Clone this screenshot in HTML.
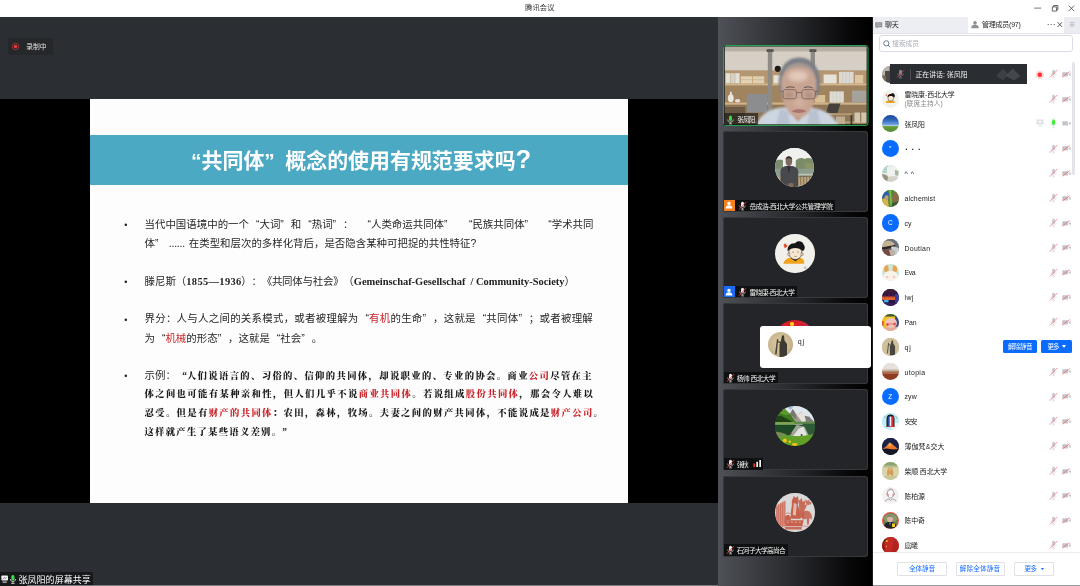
<!DOCTYPE html>
<html lang="zh-CN"><head><meta charset="utf-8"><title>腾讯会议</title>
<style>
html,body{margin:0;padding:0}
body{width:1080px;height:586px;overflow:hidden;position:relative;background:#fff;font-family:"Liberation Sans","Noto Sans CJK SC",sans-serif}
.a{position:absolute}
.t{position:absolute;white-space:nowrap;text-spacing-trim:space-all;font-kerning:none;filter:blur(.28px)}
.ql{display:inline-block;width:1em;text-align:right;letter-spacing:0}
.qr{display:inline-block;width:1em;text-align:left;letter-spacing:0}
.r{color:#c8262c}
.tile{position:absolute;left:723px;width:144.5px;height:81px;background:#232528;border-radius:3px;box-shadow:inset 0 0 0 1px #36383c}
.lab{position:absolute;left:723.5px;height:11.7px;background:rgba(12,13,14,.86)}
.av{position:absolute;border-radius:50%;overflow:hidden}
svg{position:absolute;overflow:visible}
</style></head><body>
<div class="t" style='left:525px;top:3.49px;font-size:7.3px;line-height:10.22px;color:#333;font-weight:400;font-family:"Liberation Sans","Noto Sans CJK SC",sans-serif;letter-spacing:0.104px;'>腾讯会议</div>
<svg style="left:1030px;top:0" width="50" height="17" viewBox="0 0 50 17">
<path d="M4.2 8.1h7" stroke="#555" stroke-width="0.8" fill="none"/>
<path d="M22.3 6.9h4.3v4.2h-4.3zM23.6 6.9v-1.4h4.3v4.2h-1.3" stroke="#444" stroke-width="0.8" fill="none"/>
<path d="M38.8 5.6l5.3 5.4M44.1 5.6l-5.3 5.4" stroke="#444" stroke-width="0.8" fill="none"/>
</svg>
<div class="a" style="left:0px;top:17px;width:718px;height:569px;background:#2b2e32;"></div>
<div class="a" style="left:0px;top:99px;width:718px;height:404px;background:#000;"></div>
<div class="a" style="left:90px;top:99px;width:538px;height:404px;background:#fdfdfd;"></div>
<div class="a" style="left:90px;top:135px;width:538px;height:49.5px;background:#4ba9c3;"></div>
<div class="a" style="left:7.5px;top:38px;width:45.5px;height:16.5px;background:#25272a;border-radius:2px"></div>
<svg style="left:11px;top:42px" width="9" height="9" viewBox="0 0 9 9"><circle cx="4.5" cy="4.5" r="3.3" fill="none" stroke="#c43a3a" stroke-width="0.7"/><circle cx="4.5" cy="4.5" r="1.8" fill="#e23c3c"/></svg>
<div class="t" style='left:26.2px;top:41.84px;font-size:6.8px;line-height:9.52px;color:#e4e4e4;font-weight:400;font-family:"Liberation Sans","Noto Sans CJK SC",sans-serif;letter-spacing:-0.045px;'>录制中</div>
<div class="t" style='left:180.6px;top:145.94px;font-size:20.95px;line-height:29.33px;color:#fff;font-weight:700;font-family:"Liberation Sans","Noto Sans CJK SC",sans-serif;'><span class="ql">“</span>共同体<span class="qr">”</span>概念的使用有规范要求吗<span style="font-size:1.22em;line-height:0;position:relative;top:0.4px">?</span></div>
<div class="t" style='left:124.3px;top:218.9px;font-size:9px;line-height:12.6px;color:#222;font-weight:400;font-family:"Liberation Sans","Noto Sans CJK SC",sans-serif;'>•</div>
<div class="t" style='left:124.3px;top:275.7px;font-size:9px;line-height:12.6px;color:#222;font-weight:400;font-family:"Liberation Sans","Noto Sans CJK SC",sans-serif;'>•</div>
<div class="t" style='left:124.3px;top:313.6px;font-size:9px;line-height:12.6px;color:#222;font-weight:400;font-family:"Liberation Sans","Noto Sans CJK SC",sans-serif;'>•</div>
<div class="t" style='left:124.3px;top:369.9px;font-size:9px;line-height:12.6px;color:#222;font-weight:400;font-family:"Liberation Sans","Noto Sans CJK SC",sans-serif;'>•</div>
<div class="t" style='left:144.5px;top:217.78px;font-size:10.45px;line-height:14.63px;color:#262626;font-weight:400;font-family:"Liberation Sans","Noto Sans CJK SC",sans-serif;letter-spacing:0.013px;'>当代中国语境中的一个<span class="ql">“</span>大词<span class="qr">”</span>和<span class="ql">“</span>热词<span class="qr">”</span>：</div>
<div class="t" style='left:360.5px;top:217.78px;font-size:10.45px;line-height:14.63px;color:#262626;font-weight:400;font-family:"Liberation Sans","Noto Sans CJK SC",sans-serif;letter-spacing:0.008px;'><span class="ql">“</span>人类命运共同体<span class="qr">”</span></div>
<div class="t" style='left:462px;top:217.78px;font-size:10.45px;line-height:14.63px;color:#262626;font-weight:400;font-family:"Liberation Sans","Noto Sans CJK SC",sans-serif;letter-spacing:-0.01px;'><span class="ql">“</span>民族共同体<span class="qr">”</span></div>
<div class="t" style='left:541.3px;top:217.78px;font-size:10.45px;line-height:14.63px;color:#262626;font-weight:400;font-family:"Liberation Sans","Noto Sans CJK SC",sans-serif;letter-spacing:0.003px;'><span class="ql">“</span>学术共同</div>
<div class="t" style='left:144.5px;top:237.09px;font-size:10.45px;line-height:14.63px;color:#262626;font-weight:400;font-family:"Liberation Sans","Noto Sans CJK SC",sans-serif;'>体<span class="qr">”</span></div>
<div class="t" style='left:168.8px;top:237.09px;font-size:10.45px;line-height:14.63px;color:#262626;font-weight:400;font-family:"Liberation Sans","Noto Sans CJK SC",sans-serif;letter-spacing:-0.221px;'>......</div>
<div class="t" style='left:188.8px;top:237.09px;font-size:10.45px;line-height:14.63px;color:#262626;font-weight:400;font-family:"Liberation Sans","Noto Sans CJK SC",sans-serif;letter-spacing:-0.005px;'>在类型和层次的多样化背后，是否隐含某种可把捉的共性特征?</div>
<div class="t" style='left:144.5px;top:274.58px;font-size:10.45px;line-height:14.63px;color:#262626;font-weight:400;font-family:"Liberation Sans","Noto Sans CJK SC",sans-serif;letter-spacing:0.017px;'>滕尼斯（</div>
<div class="t" style='left:186.3px;top:274.79px;font-size:10.45px;line-height:14.63px;color:#222;font-weight:700;font-family:"Liberation Serif","Noto Serif CJK SC",serif;letter-spacing:0.352px;'>1855—1936</div>
<div class="t" style='left:241.3px;top:274.58px;font-size:10.45px;line-height:14.63px;color:#262626;font-weight:400;font-family:"Liberation Sans","Noto Sans CJK SC",sans-serif;letter-spacing:-0.231px;'>）：《共同体与社会》（</div>
<div class="t" style='left:353.8px;top:274.79px;font-size:10.45px;line-height:14.63px;color:#222;font-weight:700;font-family:"Liberation Serif","Noto Serif CJK SC",serif;letter-spacing:-0.015px;'>Gemeinschaf-Gesellschaf&nbsp; / Community-Society</div>
<div class="t" style='left:564.5px;top:274.58px;font-size:10.45px;line-height:14.63px;color:#262626;font-weight:400;font-family:"Liberation Sans","Noto Sans CJK SC",sans-serif;'>）</div>
<div class="t" style='left:144.5px;top:312.49px;font-size:10.45px;line-height:14.63px;color:#262626;font-weight:400;font-family:"Liberation Sans","Noto Sans CJK SC",sans-serif;letter-spacing:0.266px;'>界分：人与人之间的关系模式，或者被理解为<span class="ql">“</span><span class="r">有机</span>的生命<span class="qr">”</span>，这就是<span class="ql">“</span>共同体<span class="qr">”</span>；或者被理解</div>
<div class="t" style='left:144.5px;top:331.69px;font-size:10.45px;line-height:14.63px;color:#262626;font-weight:400;font-family:"Liberation Sans","Noto Sans CJK SC",sans-serif;letter-spacing:0.01px;'>为<span class="ql">“</span><span class="r">机械</span>的形态<span class="qr">”</span>，这就是<span class="ql">“</span>社会<span class="qr">”</span>。</div>
<div class="t" style='left:144.5px;top:368.79px;font-size:10.45px;line-height:14.63px;color:#262626;font-weight:400;font-family:"Liberation Sans","Noto Sans CJK SC",sans-serif;letter-spacing:0.044px;'>示例：</div>
<div class="t" style='left:177.5px;top:369.52px;font-size:9.4px;line-height:13.16px;color:#1c1c1c;font-weight:900;font-family:"Liberation Serif","Noto Serif CJK SC",serif;letter-spacing:1.311px;'><span class="ql">“</span>人们说语言的、习俗的、信仰的共同体，却说职业的、专业的协会。商业<span class="r">公司</span>尽管在主</div>
<div class="t" style='left:144.5px;top:388.22px;font-size:9.4px;line-height:13.16px;color:#1c1c1c;font-weight:900;font-family:"Liberation Serif","Noto Serif CJK SC",serif;letter-spacing:1.333px;'>体之间也可能有某种亲和性，但人们几乎不说<span class="r">商业共同体</span>。若说组成<span class="r">股份共同体</span>，那会令人难以</div>
<div class="t" style='left:144.5px;top:407.12px;font-size:9.4px;line-height:13.16px;color:#1c1c1c;font-weight:900;font-family:"Liberation Serif","Noto Serif CJK SC",serif;letter-spacing:1.317px;'>忍受。但是有<span class="r">财产的共同体</span>：农田，森林，牧场。夫妻之间的财产共同体，不能说成是<span class="r">财产公司</span>。</div>
<div class="t" style='left:144.5px;top:426.32px;font-size:9.4px;line-height:13.16px;color:#1c1c1c;font-weight:900;font-family:"Liberation Serif","Noto Serif CJK SC",serif;letter-spacing:1.225px;'>这样就产生了某些语义差别。”</div>
<div class="a" style="left:0px;top:572px;width:92.6px;height:14px;background:#17181a;"></div>
<svg style="left:1px;top:574.5px" width="16" height="9" viewBox="0 0 16 9">
<rect x="0.4" y="0.4" width="6.6" height="5.2" rx="0.8" fill="#f2f2f2"/><path d="M2.2 4.2l1.2-1.6 1 .9 1.1-1.3" stroke="#555" stroke-width="0.7" fill="none"/><rect x="1.6" y="6.6" width="4.2" height="1" fill="#f2f2f2"/>
<rect x="10.4" y="0" width="3" height="5.4" rx="1.5" fill="#3fe04f"/><path d="M9.3 4c0 3.4 5.2 3.4 5.2 0M11.9 6.6v1.6M10.2 8.4h3.4" stroke="#e8e8e8" stroke-width="0.8" fill="none"/>
</svg>
<div class="t" style='left:18.5px;top:573.7px;font-size:9px;line-height:12.6px;color:#fff;font-weight:400;font-family:"Liberation Sans","Noto Sans CJK SC",sans-serif;letter-spacing:0.041px;'>张凤阳的屏幕共享</div>
<div class="a" style="left:27px;top:585px;width:845px;height:1px;background:#77797c;"></div>
<div class="a" style="left:718px;top:17px;width:154px;height:569px;background:linear-gradient(to right,#4e5157 0%,#3a3c41 25%,#232427 55%,#08080a 85%,#000 100%);"></div>
<svg style="left:722.5px;top:45px" width="145.5" height="81" viewBox="0 0 145.5 81">
<defs><filter id="bl" x="-5%" y="-5%" width="110%" height="110%"><feGaussianBlur stdDeviation="0.5"/></filter>
<filter id="bl2" x="-10%" y="-10%" width="120%" height="120%"><feGaussianBlur stdDeviation="1"/></filter>
<filter id="bl3" x="-20%" y="-20%" width="140%" height="140%"><feGaussianBlur stdDeviation="2"/></filter>
<clipPath id="vc"><rect x="1.8" y="1.6" width="141.8" height="77.6" rx="1.2"/></clipPath></defs>
<rect x="0" y="0" width="145.5" height="81" rx="2.5" fill="#13241a"/>
<g clip-path="url(#vc)">
<g filter="url(#bl)">
<rect x="0" y="0" width="146" height="27" fill="#d6cfc6"/>
<rect x="0" y="0" width="146" height="6.4" fill="#b7afa4"/>
<rect x="0" y="25.6" width="146" height="56" fill="#a98b66"/>
<rect x="0" y="25.6" width="146" height="12.8" fill="#b4976f"/>
<rect x="0" y="38.4" width="146" height="2.2" fill="#d2b78e"/>
<rect x="0" y="40.6" width="146" height="17" fill="#a08460"/>
<rect x="0" y="57.6" width="146" height="2.2" fill="#cfb48b"/>
<rect x="0" y="59.8" width="146" height="22" fill="#8f7656"/>
<rect x="0" y="76.5" width="146" height="1.8" fill="#bfa27a"/>
<rect x="44.8" y="4" width="4.4" height="66" fill="#8f8b85"/>
<rect x="87.6" y="4" width="4.4" height="40" fill="#8f8b85"/>
<rect x="43.6" y="4.2" width="7" height="2.8" fill="#5a5753"/>
<rect x="86.4" y="4.2" width="7" height="2.8" fill="#5a5753"/>
<rect x="2.6" y="28.2" width="4.4" height="10" fill="#e5e0d8"/><rect x="7.4" y="28.2" width="4.4" height="10" fill="#d6d1c8"/><rect x="12.2" y="28.2" width="4.4" height="10" fill="#e5e0d8"/>
<rect x="17.8" y="31.3" width="11.4" height="7" fill="#e3d3b5"/><rect x="29.8" y="31.3" width="11.4" height="7" fill="#e0cfb0"/>
<rect x="17.8" y="34.5" width="23.4" height="0.6" fill="#c2ae8b"/>
<rect x="50.4" y="30.3" width="7.6" height="8" fill="#e6e2da"/>
<circle cx="54.8" cy="23.8" r="3.1" fill="#1b1a19"/>
<rect x="100.6" y="29.5" width="13" height="8.8" fill="#e8e3da"/>
<rect x="116" y="26.8" width="14.5" height="11.5" fill="#dcd9d2"/><path d="M119.500 26.800v11.500M123 26.800v11.500M126.500 26.800v11.500" stroke="#c2beb6" stroke-width="0.500"/>
<rect x="132" y="30" width="8.200" height="8.300" fill="#ddc7a1"/>
<rect x="106.600" y="46.400" width="14.200" height="11.200" fill="#dedbd5"/><path d="M110 46.400v11.200M113.500 46.400v11.200M117 46.400v11.200" stroke="#c4c0b8" stroke-width="0.500"/>
<rect x="129" y="45.600" width="14.500" height="12" fill="#a5a19b"/>
<rect x="92" y="50" width="10.200" height="7.600" fill="#d8bf94"/>
<ellipse cx="7.800" cy="53.200" rx="2.900" ry="3.900" fill="#ebe7e0"/><rect x="7" y="46.800" width="1.700" height="4" fill="#ebe7e0"/>
<ellipse cx="14.600" cy="55.800" rx="2.700" ry="1.700" fill="#e6e1d9"/>
<rect x="23.800" y="49" width="20.200" height="18.600" fill="#8b8d8f"/>
<path d="M103 68l3-9.500h11.500l-3 9.500z" fill="#45413e"/>
<rect x="101" y="68.300" width="28" height="1.900" fill="#b59a78"/>
<rect x="127.500" y="70" width="1.800" height="10" fill="#3c3a38"/>
<rect x="113" y="71.500" width="9" height="8" fill="#bfae92"/>
<rect x="131.500" y="67.500" width="5.600" height="10" fill="#d2c6af"/><rect x="138.300" y="67.500" width="5.600" height="10" fill="#d2c6af"/>
<rect x="2" y="62" width="20" height="18" fill="#6d5a43"/>
</g>
<g filter="url(#bl2)">
<path d="M33 82c3-12 12-17.500 25-19.500l30 0c14 2 23 7.500 28 19.500z" fill="#cdd5e1"/>
<path d="M57 63.500l8 3 2 14h-14z" fill="#b9c2d0"/><path d="M94 63.500l-8 3-2 14h14z" fill="#b9c2d0"/>
<path d="M62 61l13 16 13-16z" fill="#bd9683"/>
<path d="M56.500 44c-3-17 5-31.500 19.500-31.500s23.500 13 20.500 32c-1 4-2 6-3.500 8l-33 0c-2-2-3-5-3.500-8.500z" fill="#7c7f85"/>
<path d="M58.300 41c-1-12 5.500-20.500 17.500-20.500s18 8 17.500 20.500c-.3 8-1.500 16-5 22.500-3 5.500-8 9.500-12.500 9.500s-9.500-4-12.500-9.500c-3.500-6.500-4.700-14.500-5-22.500z" fill="#c8a492"/>
<path d="M60 31c3-6 8.500-8.500 16-8.500s13 2.500 16 8.500c-1.500-8-7-13-16-13s-14.500 5-16 13z" fill="#a99a94"/>
</g>
<g filter="url(#bl3)"><ellipse cx="75" cy="31" rx="10" ry="5.500" fill="#e2c9b9"/><ellipse cx="76" cy="58" rx="5" ry="4" fill="#d6b3a1"/><ellipse cx="66" cy="50" rx="4" ry="2.500" fill="#a98574"/><ellipse cx="86" cy="50" rx="4" ry="2.500" fill="#a98574"/></g>
<g filter="url(#bl)">
<path d="M68.500 66.300c2.500 1.300 5 1.700 7.500 1.700s5-.4 7.500-1.700c-2-1.500-4.500-2.100-7.500-2.100s-5.500.6-7.500 2.100z" fill="#a56b68" opacity="0.850"/>
<g fill="none" stroke="#5a4b49" stroke-width="0.650" opacity="0.900"><rect x="60" y="44.600" width="13.500" height="9.200" rx="2.600"/><rect x="78.800" y="44.600" width="13.500" height="9.200" rx="2.600"/><path d="M73.500 47.600h5.300M60 47l-2.500-1M92.300 47l2.500-1"/></g>
<path d="M63 42.800c2.500-1.200 6-1.200 8.500-.2M81 42.600c2.500-1 6-1 8.500.2" stroke="#5d514d" stroke-width="1" fill="none"/>
</g>
</g>
<rect x="0.5" y="0.5" width="144.500" height="80" rx="2.500" fill="none" stroke="#21a04f" stroke-width="1"/>
</svg>
<div class="lab" style="top:113.3px;width:34px;left:724px;background:rgba(20,20,20,.62)"></div>
<svg style="left:726px;top:114.500px" width="9" height="10" viewBox="0 0 9 10"><rect x="3" y="0.6" width="3" height="5.4" rx="1.5" fill="#39d64a"/><path d="M1.800 4.600c0 3.400 5.400 3.400 5.400 0M4.500 7.200v1.400M3 8.900h3" stroke="#e4e4e4" stroke-width="0.7" fill="none"/></svg>
<div class="t" style='left:737.2px;top:115.48px;font-size:6.6px;line-height:9.24px;color:#f1f1f1;font-weight:400;font-family:"Liberation Sans","Noto Sans CJK SC",sans-serif;letter-spacing:-0.791px;'>张凤阳</div>
<div class="tile" style="top:131.1px"></div>
<div class="av" style="left:774.9px;top:147.8px;width:39.6px;height:39.6px;background:#eeeeec"><svg style="left:0;top:0" width="39.600" height="39.600" viewBox="0 0 40 40"><defs><filter id="b3" x="-10%" y="-10%" width="120%" height="120%"><feGaussianBlur stdDeviation="0.650"/></filter></defs><g filter="url(#b3)"><rect x="-2" y="-2" width="44" height="16" fill="#f0f0ee"/><path d="M-2 14c3-2 6-2.500 10-2v12h-10z" fill="#7d8c70"/><path d="M21 13c2-3 6-3.500 9-2 3-1.500 7-1 12 2v11H21z" fill="#7c8b68"/><path d="M30 16c3-2 7-1 10 3v8H30z" fill="#8b9667"/><rect x="-2" y="21" width="44" height="9" fill="#8e9c8e"/><rect x="22" y="26" width="20" height="3" fill="#b9c3b4"/><rect x="-2" y="29" width="44" height="13" fill="#bca47a"/><path d="M24 28.500h18" stroke="#4a4438" stroke-width="0.800"/><path d="M26 28.500v9M29 28.500v9M32 28.500v9M35 28.500v9M38 28.500v9" stroke="#6a5f4a" stroke-width="0.700"/><path d="M5.500 41V24c0-3.500 2.500-5 5.500-5.800h6.500c3 .8 6 2.300 6 5.800v17z" fill="#47484e"/><path d="M12.500 19l1.500 7 1.500-7z" fill="#2b2c31"/><ellipse cx="14" cy="13.500" rx="3.300" ry="4.800" fill="#7d6a5e"/><path d="M10.600 12c0-5 6.800-5 6.800 0-1.200-2-5.400-2-6.800 0z" fill="#3a3633"/><path d="M13 36c2-1 4-1 6 0l-1 3h-4z" fill="#8a6a55"/></g></svg></div>
<div class="lab" style="top:199.6px;width:111px"></div>
<div class="a" style="left:723.5px;top:199.6px;width:11.8px;height:11.7px;background:#f5811f"></div>
<svg style="left:725.4px;top:201.4px" width="8" height="8" viewBox="0 0 8 8"><circle cx="4" cy="2.4" r="1.7" fill="#fff"/><path d="M0.6 7.6c0-2.6 1.6-3.4 3.4-3.4s3.4.8 3.4 3.4z" fill="#fff"/></svg>
<svg style="left:737.8px;top:200.8px" width="9" height="10" viewBox="0 0 9 10"><rect x="3" y="0.8" width="3" height="5.2" rx="1.5" fill="#e9e9e9"/><path d="M1.8 4.6c0 3.4 5.4 3.4 5.4 0M4.5 7.2v1.4M3 8.9h3" stroke="#dcdcdc" stroke-width="0.7" fill="none"/><path d="M1 8.6L8 1.2" stroke="#e8413d" stroke-width="1"/></svg>
<div class="t" style='left:749.5px;top:201.71px;font-size:6.7px;line-height:9.38px;color:#f4f4f4;font-weight:400;font-family:"Liberation Sans","Noto Sans CJK SC",sans-serif;letter-spacing:-0.444px;'>岳成浩-西北大学公共管理学院</div>
<div class="tile" style="top:217.2px"></div>
<div class="av" style="left:775.1px;top:233.9px;width:39.6px;height:39.6px;background:#f2f0eb"><svg style="left:0;top:0" width="39.600" height="39.600" viewBox="0 0 40 40"><defs><filter id="b4"><feGaussianBlur stdDeviation="0.450"/></filter></defs><g filter="url(#b4)"><path d="M8.400 30c1-4.500 5-6.500 12-6.500s9.500 2 9 6.500z" fill="#f2a31f"/><path d="M16 24.500l4.500 3 4.500-3-4.500-1.500z" fill="#2a2624"/><ellipse cx="20.500" cy="19" rx="6.600" ry="6.800" fill="#f7e6d0" stroke="#2d2a28" stroke-width="0.600"/><ellipse cx="14" cy="20.500" rx="1.200" ry="1.600" fill="#f3ddc6" stroke="#2d2a28" stroke-width="0.400"/><ellipse cx="27.300" cy="20.500" rx="1.200" ry="1.600" fill="#f3ddc6" stroke="#2d2a28" stroke-width="0.400"/><path d="M12.800 17.500c-.8-5.500 3.200-8.700 7.700-8.200 2-3 7.500-2.500 8.500 1.500 2 2.300 1 5.200-1 6.500-2-2.500-4.500-3.200-7.500-3.200-3.200 0-5.500 1-7.700 3.400z" fill="#141313"/><path d="M9.300 10.300c.8-1.200 2.400-.5 1.900.9.900-.6 2 .5 1 1.600l-2.300 1.600-1.100-2.500c-.3-.8 0-1.300.5-1.600z" fill="#e4502c"/><path d="M17.500 18.300h1.600M22.500 18.300h1.600" stroke="#3a3532" stroke-width="0.500"/><path d="M19.300 22.300c1 .6 2 .6 3 0" stroke="#6a4a40" stroke-width="0.500" fill="none"/><path d="M28.500 33.500l2.500 2.500 1-3.500z" fill="#bdbdbd"/></g></svg></div>
<div class="lab" style="top:285.7px;width:73.4px"></div>
<div class="a" style="left:723.5px;top:285.7px;width:11.8px;height:11.7px;background:#1a6bf0"></div>
<svg style="left:725.4px;top:287.5px" width="8" height="8" viewBox="0 0 8 8"><circle cx="4" cy="2.4" r="1.7" fill="#fff"/><path d="M0.6 7.6c0-2.6 1.6-3.4 3.4-3.4s3.4.8 3.4 3.4z" fill="#fff"/></svg>
<svg style="left:737.8px;top:286.9px" width="9" height="10" viewBox="0 0 9 10"><rect x="3" y="0.8" width="3" height="5.2" rx="1.5" fill="#e9e9e9"/><path d="M1.8 4.6c0 3.4 5.4 3.4 5.4 0M4.5 7.2v1.4M3 8.9h3" stroke="#dcdcdc" stroke-width="0.7" fill="none"/><path d="M1 8.6L8 1.2" stroke="#e8413d" stroke-width="1"/></svg>
<div class="t" style='left:749.5px;top:287.81px;font-size:6.7px;line-height:9.38px;color:#f4f4f4;font-weight:400;font-family:"Liberation Sans","Noto Sans CJK SC",sans-serif;letter-spacing:-0.521px;'>雷晓康-西北大学</div>
<div class="tile" style="top:303.3px"></div>
<div class="av" style="left:775.1px;top:320.0px;width:39.6px;height:39.6px;background:linear-gradient(100deg,#e21b23 0%,#d81e2c 55%,#8d3a78 85%,#5b4b9a 100%)"><div class="a" style="left:15.200px;top:2.200px;width:3.400px;height:3.400px;background:#f5d21a;border-radius:50%"></div></div>
<div class="lab" style="top:371.8px;width:54.5px"></div>
<svg style="left:725.6px;top:373.0px" width="9" height="10" viewBox="0 0 9 10"><rect x="3" y="0.8" width="3" height="5.2" rx="1.5" fill="#e9e9e9"/><path d="M1.8 4.6c0 3.4 5.4 3.4 5.4 0M4.5 7.2v1.4M3 8.9h3" stroke="#dcdcdc" stroke-width="0.7" fill="none"/><path d="M1 8.6L8 1.2" stroke="#e8413d" stroke-width="1"/></svg>
<div class="t" style='left:736.8px;top:373.91px;font-size:6.7px;line-height:9.38px;color:#f4f4f4;font-weight:400;font-family:"Liberation Sans","Noto Sans CJK SC",sans-serif;letter-spacing:-0.514px;'>杨帅 西北大学</div>
<div class="tile" style="top:389.4px"></div>
<div class="av" style="left:775.2px;top:406.2px;width:39.4px;height:39.4px;background:#3d5a2a"><svg style="left:0;top:0" width="39.400" height="39.400" viewBox="0 0 40 40"><defs><filter id="b5" x="-10%" y="-10%" width="120%" height="120%"><feGaussianBlur stdDeviation="0.800"/></filter></defs><g filter="url(#b5)"><rect x="-2" y="-2" width="44" height="22" fill="#dfe6ee"/><path d="M10 -2h10l-4 6z" fill="#9db7dc"/><path d="M13 16l5-13 4 6 5-3 6 5 9 6z" fill="#a39c90"/><path d="M15 8l3-5 3 5 1 6z" fill="#7d766b"/><path d="M22 9l6-3 8 6-8 5z" fill="#e6e3dc"/><path d="M30 10l5 1 5 6h-8z" fill="#7c7f74"/><path d="M-2 18V9l6-3.500 6-2.500 6 6 6 9z" fill="#3c7a22"/><path d="M-2 18v-7l8-1 8 4 7 4z" fill="#1f4318"/><path d="M4 7l6-3.500 5 5-4 1z" fill="#5a9c2a"/><rect x="-2" y="16.300" width="22" height="2.800" fill="#7fa552"/><rect x="20" y="16" width="22" height="2.600" fill="#5f8a4a"/><rect x="-2" y="19" width="44" height="12" fill="#1f4a25"/><path d="M28 18h14v12H30z" fill="#2f5a38"/><path d="M14 31l8-12 8 2 5 10z" fill="#9ea596"/><path d="M18 31l6-8 5-2 4 10z" fill="#e1e4e1"/><path d="M-2 27c8 1 14 3 20 3.500s14 0 24-3v16h-44z" fill="#5fa127"/><path d="M-2 26c5 0 9 1 14 3l-4 2-10-1z" fill="#7a8a5a"/><circle cx="15.500" cy="27.800" r="1.200" fill="#5a3a2a"/><circle cx="27" cy="29.500" r="1" fill="#4a3a30"/><circle cx="10" cy="35" r="2.100" fill="#f2c21a"/><circle cx="15" cy="36.300" r="1.300" fill="#f2c21a"/><ellipse cx="20" cy="39" rx="3" ry="1.500" fill="#f2c21a"/></g></svg></div>
<div class="lab" style="top:457.9px;width:39.3px"></div>
<svg style="left:725.6px;top:459.1px" width="9" height="10" viewBox="0 0 9 10"><rect x="3" y="0.8" width="3" height="5.2" rx="1.5" fill="#e9e9e9"/><path d="M1.8 4.6c0 3.4 5.4 3.4 5.4 0M4.5 7.2v1.4M3 8.9h3" stroke="#dcdcdc" stroke-width="0.7" fill="none"/><path d="M1 8.6L8 1.2" stroke="#e8413d" stroke-width="1"/></svg>
<div class="t" style='left:736.8px;top:460.01px;font-size:6.7px;line-height:9.38px;color:#f4f4f4;font-weight:400;font-family:"Liberation Sans","Noto Sans CJK SC",sans-serif;letter-spacing:-1.375px;'>张秋</div>
<svg style="left:752.800px;top:460.2px" width="9" height="7" viewBox="0 0 9 7"><rect x="0.3" y="3.400" width="1.700" height="3.600" fill="#e8302a"/><rect x="3.300" y="1.800" width="1.700" height="5.200" fill="#f2f2f2"/><rect x="6.300" y="0" width="1.700" height="7" fill="#f2f2f2"/></svg>
<div class="tile" style="top:475.5px"></div>
<div class="av" style="left:775.1px;top:492.5px;width:39.6px;height:39.6px;background:#dad8d8"><svg style="left:0;top:0" width="39.600" height="39.600" viewBox="0 0 40 40"><defs><filter id="b6" x="-10%" y="-10%" width="120%" height="120%"><feGaussianBlur stdDeviation="0.550"/></filter></defs><g filter="url(#b6)" fill="#c2472f" opacity="0.820"><path d="M1 14l10-6.500V34H1z" fill="#d98f80"/><path d="M2 12v22M3.800 11v23M5.600 10v24M7.400 9v25M9.200 8v26" stroke="#c2472f" stroke-width="0.800"/><path d="M11 21c1.500-1 3-1 5 0" stroke="#c2472f" stroke-width="0.600" fill="none"/><path d="M17 8l2-5 2 2 2-2 1 5-1 4 2 6 1 8h-10l0-7 1-6z"/><path d="M19 10l3 1-1 12-3-1z" fill="#e3b3a6"/><path d="M24 8l3-3 1 4 3-2-1 5 3-1-3 6-1 8-4 0z" opacity=".9"/><path d="M26 22c2-4 6-5 9-3 2 2 3 5 2 8l-2-2-1 7h-1.500l-.5-6-4 1z" opacity=".85"/><path d="M31 6l1.500 2 2-1.500.5 2.500 2 0-1 2.500-3 .5-2-2z" opacity=".85"/><path d="M9.500 27.500h19.500l-1.500 6h-16.500z"/><path d="M10 24c2-2.500 4-2.500 6 0l0 3.500h-6z"/><path d="M12 29.500h2M16 29.500h2M20 29.500h2M24 29.500h2" stroke="#e6b0a2" stroke-width="0.800"/><rect x="10" y="34.300" width="17" height="2.600" opacity=".9"/><path d="M27 33.500h10" stroke="#c2472f" stroke-width="0.500"/></g></svg></div>
<div class="lab" style="top:544.0px;width:64.7px"></div>
<svg style="left:725.6px;top:545.2px" width="9" height="10" viewBox="0 0 9 10"><rect x="3" y="0.8" width="3" height="5.2" rx="1.5" fill="#e9e9e9"/><path d="M1.8 4.6c0 3.4 5.4 3.4 5.4 0M4.5 7.2v1.4M3 8.9h3" stroke="#dcdcdc" stroke-width="0.7" fill="none"/><path d="M1 8.6L8 1.2" stroke="#e8413d" stroke-width="1"/></svg>
<div class="t" style='left:736.8px;top:546.11px;font-size:6.7px;line-height:9.38px;color:#f4f4f4;font-weight:400;font-family:"Liberation Sans","Noto Sans CJK SC",sans-serif;letter-spacing:-0.643px;'>石河子大学高尚合</div>
<div class="a" style="left:759.5px;top:325.6px;width:111.9px;height:42.3px;background:#fff;border-radius:3px"></div>
<div class="av" style="left:768.1px;top:332.3px;width:25px;height:25px;background:radial-gradient(circle at 45% 45%,#d9c9a4 0%,#c9b78f 55%,#ad9c78 100%)"><svg style="left:0;top:0" width="25" height="25" viewBox="0 0 25 25"><defs><filter id="b7"><feGaussianBlur stdDeviation="0.5"/></filter></defs><g filter="url(#b7)"><path d="M11.500 25V12.500l1.500-4 1-5h2l.5 5 2.500 3.500V25z" fill="#3d3a32"/><path d="M7 22l2-15 1.300.2-1.600 15z" fill="#4a463c"/><path d="M9 9l4 2" stroke="#3d3a32" stroke-width="1.200"/></g></svg></div>
<div class="t" style='left:797.8px;top:336.9px;font-size:7px;line-height:9.8px;color:#222;font-weight:400;font-family:"Liberation Sans","Noto Sans CJK SC",sans-serif;letter-spacing:0.747px;'>qj</div>
<div class="a" style="left:872px;top:17px;width:208px;height:569px;background:#fff;"></div>
<div class="a" style="left:872px;top:17px;width:96px;height:16px;background:#eceef3;"></div>
<div class="a" style="left:1064.2px;top:17px;width:15.8px;height:16px;background:#eaecf1;"></div>
<div class="a" style="left:872px;top:32.6px;width:208px;height:0.8px;background:#e3e5ea;"></div>
<div class="a" style="left:968px;top:17px;width:96.2px;height:16.2px;background:#fff;"></div>
<svg style="left:874.900px;top:21.700px" width="7.400" height="7.200" viewBox="0 0 7.400 7.200"><path d="M0.200 0.200h7v5H3.200L1.600 6.800V5.200H0.200z" fill="#8e9097"/><path d="M1.300 1.900h4.800M1.300 3.400h4.800" stroke="#c9cbd1" stroke-width="0.600"/></svg>
<div class="t" style='left:885px;top:20.0px;font-size:7px;line-height:9.8px;color:#222;font-weight:400;font-family:"Liberation Sans","Noto Sans CJK SC",sans-serif;letter-spacing:-0.3px;'>聊天</div>
<svg style="left:971px;top:21px" width="8" height="7.500" viewBox="0 0 8 7.500"><circle cx="4" cy="1.900" r="1.800" fill="#8d9096"/><path d="M0.200 7.300c0-2.600 1.600-3.500 3.800-3.500s3.800.9 3.800 3.500z" fill="#8d9096"/></svg>
<div class="t" style='left:981.9px;top:19.9px;font-size:7px;line-height:9.8px;color:#222;font-weight:400;font-family:"Liberation Sans","Noto Sans CJK SC",sans-serif;letter-spacing:-0.208px;'>管理成员(97)</div>
<svg style="left:1046.500px;top:21px" width="16" height="8" viewBox="0 0 16 8"><circle cx="1.200" cy="3.600" r="0.550" fill="#444"/><circle cx="4.200" cy="3.600" r="0.550" fill="#444"/><circle cx="7.200" cy="3.600" r="0.550" fill="#444"/><path d="M10.500 1.200l4.600 4.800M15.100 1.200l-4.600 4.800" stroke="#333" stroke-width="0.800"/></svg>
<svg style="left:1069.800px;top:22.300px" width="5" height="5" viewBox="0 0 5 5"><path d="M0 0.700h4.400M0 2.400h4.400M0 4.100h4.400" stroke="#b4b7bf" stroke-width="0.900"/></svg>
<div class="a" style="left:879px;top:35.200px;width:194.200px;height:17px;border:1px solid #d9dce6;border-radius:3px;box-sizing:border-box;background:#fff"></div>
<svg style="left:883px;top:40.200px" width="8" height="8" viewBox="0 0 8 8"><circle cx="3.300" cy="3.300" r="2.600" fill="none" stroke="#5b6a8a" stroke-width="0.900"/><path d="M5.200 5.200l2 2" stroke="#5b6a8a" stroke-width="1"/></svg>
<div class="t" style='left:892px;top:39.14px;font-size:6.8px;line-height:9.52px;color:#a9adb5;font-weight:400;font-family:"Liberation Sans","Noto Sans CJK SC",sans-serif;letter-spacing:-0.062px;'>搜索成员</div>
<div class="a" style="left:1072px;top:61.5px;width:3.2px;height:113px;background:#e3e5ea;border-radius:1.600px"></div>
<div class="a" style="left:872px;top:56px;width:208px;height:496.300px;overflow:hidden"><div class="a" style="left:-872px;top:-56px;width:1080px;height:586px">
<div class="av" style="left:881.6px;top:65.6px;width:17.2px;height:17.2px;background:#8a8478"><svg style="left:0;top:0" width="17.2" height="17.2" viewBox="0 0 17.2 17.2"><defs><filter id="m0" x="-15%" y="-15%" width="130%" height="130%"><feGaussianBlur stdDeviation="0.6"/></filter></defs><g filter="url(#m0)"><rect x="-1" y="-1" width="8" height="10" fill="#b9b4a8"/><rect x="3" y="5" width="6" height="13" fill="#4f4a44"/><rect x="-1" y="10" width="5" height="8" fill="#7a6a55"/></g></svg></div>
<svg style="left:1048.600px;top:69.2px" width="9" height="10" viewBox="0 0 9 10"><rect x="3.100" y="0.800" width="2.800" height="5" rx="1.400" fill="#c9cacf"/><path d="M1.900 4.400c0 3.300 5.200 3.300 5.200 0M4.500 7v1.500M3.200 8.800h2.600" stroke="#cfd0d4" stroke-width="0.650" fill="none"/><path d="M0.800 8.600L8.300 1" stroke="#f4696b" stroke-width="0.750"/></svg>
<svg style="left:1061.800px;top:70.8px" width="9" height="7" viewBox="0 0 9 7"><rect x="0.300" y="1.200" width="5.600" height="4.400" rx="0.500" fill="#c3c4c9"/><path d="M6.200 3.400l2.400-1.900v3.800z" fill="#c3c4c9"/><path d="M0.200 6.200L7.800 0.500" stroke="#f4696b" stroke-width="0.750"/></svg>
<svg style="left:1034.800px;top:69.500px" width="9.600" height="9.600" viewBox="0 0 9.600 9.600"><circle cx="4.800" cy="4.800" r="4.300" fill="#ffd9d9"/><circle cx="4.800" cy="4.800" r="2.300" fill="#ff2d2d"/></svg>
<div class="av" style="left:881.6px;top:90.4px;width:17.2px;height:17.2px;background:#f3f1ec"><svg style="left:0;top:0" width="17.2" height="17.2" viewBox="0 0 40 40"><path d="M8.400 30c1-4.500 5-6.500 12-6.500s9.500 2 9 6.500z" fill="#f2a31f"/><ellipse cx="20.500" cy="19" rx="6.600" ry="6.800" fill="#f7e6d0" stroke="#2d2a28" stroke-width="1"/><path d="M12.800 17.500c-.8-5.500 3.200-8.700 7.700-8.200 2-3 7.500-2.500 8.500 1.500 2 2.300 1 5.200-1 6.500-2-2.500-4.500-3.200-7.500-3.200-3.200 0-5.500 1-7.700 3.400z" fill="#141313"/><circle cx="10.500" cy="11.500" r="1.900" fill="#e4502c"/></svg></div>
<div class="t" style='left:904.4px;top:89.67px;font-size:6.9px;line-height:9.66px;color:#222;font-weight:400;font-family:"Liberation Sans","Noto Sans CJK SC",sans-serif;letter-spacing:-0.033px;'>雷晓康-西北大学</div>
<div class="t" style='left:904.4px;top:98.68px;font-size:6.6px;line-height:9.24px;color:#8a8a8a;font-weight:400;font-family:"Liberation Sans","Noto Sans CJK SC",sans-serif;letter-spacing:0.171px;'>(联席主持人)</div>
<svg style="left:1048.600px;top:94.0px" width="9" height="10" viewBox="0 0 9 10"><rect x="3.100" y="0.800" width="2.800" height="5" rx="1.400" fill="#c9cacf"/><path d="M1.900 4.400c0 3.300 5.200 3.300 5.200 0M4.500 7v1.500M3.200 8.800h2.600" stroke="#cfd0d4" stroke-width="0.650" fill="none"/><path d="M0.800 8.600L8.300 1" stroke="#f4696b" stroke-width="0.750"/></svg>
<svg style="left:1061.800px;top:95.6px" width="9" height="7" viewBox="0 0 9 7"><rect x="0.300" y="1.200" width="5.600" height="4.400" rx="0.500" fill="#c3c4c9"/><path d="M6.200 3.400l2.400-1.900v3.800z" fill="#c3c4c9"/><path d="M0.200 6.200L7.800 0.500" stroke="#f4696b" stroke-width="0.750"/></svg>
<div class="av" style="left:881.6px;top:115.2px;width:17.2px;height:17.2px;background:linear-gradient(180deg,#1b479a 0%,#2f66bb 30%,#6c9fdc 55%,#b9d3ea 63%,#6aa03e 68%,#4c8a2a 100%)"></div>
<div class="t" style='left:904.5px;top:119.57px;font-size:6.9px;line-height:9.66px;color:#222;font-weight:400;font-family:"Liberation Sans","Noto Sans CJK SC",sans-serif;letter-spacing:-0.136px;'>张凤阳</div>
<svg style="left:1035.500px;top:119.2px" width="8" height="8" viewBox="0 0 8 8"><rect x="0.500" y="0.500" width="7" height="5" rx="0.600" fill="#dcdde1"/><rect x="2" y="1.800" width="4" height="2.200" fill="#f5f5f7"/><rect x="2.200" y="6.700" width="3.600" height="0.800" fill="#dcdde1"/></svg>
<svg style="left:1048.600px;top:118.5px" width="9" height="10" viewBox="0 0 9 10"><rect x="3" y="0.300" width="3" height="5.600" rx="1.500" fill="#45ee3a"/><path d="M1.900 4.400c0 3.300 5.200 3.300 5.200 0M4.500 7v1.500M3.200 8.800h2.600" stroke="#d4d5d9" stroke-width="0.650" fill="none"/></svg>
<svg style="left:1061.800px;top:120.4px" width="9" height="7" viewBox="0 0 9 7"><rect x="0.300" y="1.200" width="5.600" height="4.400" rx="0.500" fill="#c3c4c9"/><path d="M6.200 3.400l2.400-1.900v3.800z" fill="#c3c4c9"/></svg>
<div class="av" style="left:881.6px;top:140.0px;width:17.2px;height:17.2px;background:#0a6cff"><div class="t" style="left:0;top:0;width:17.200px;height:17.200px;line-height:17.200px;text-align:center;font-size:6px;color:#fff">*</div></div>
<div class="t" style='left:905.2px;top:142.25px;font-size:8.5px;line-height:11.9px;color:#222;font-weight:700;font-family:"Liberation Sans","Noto Sans CJK SC",sans-serif;letter-spacing:0.847px;'>. . .</div>
<svg style="left:1048.600px;top:143.6px" width="9" height="10" viewBox="0 0 9 10"><rect x="3.100" y="0.800" width="2.800" height="5" rx="1.400" fill="#c9cacf"/><path d="M1.900 4.400c0 3.300 5.200 3.300 5.200 0M4.500 7v1.500M3.200 8.800h2.600" stroke="#cfd0d4" stroke-width="0.650" fill="none"/><path d="M0.800 8.600L8.300 1" stroke="#f4696b" stroke-width="0.750"/></svg>
<svg style="left:1061.800px;top:145.2px" width="9" height="7" viewBox="0 0 9 7"><rect x="0.300" y="1.200" width="5.600" height="4.400" rx="0.500" fill="#c3c4c9"/><path d="M6.200 3.400l2.400-1.900v3.800z" fill="#c3c4c9"/><path d="M0.200 6.200L7.800 0.500" stroke="#f4696b" stroke-width="0.750"/></svg>
<div class="av" style="left:881.6px;top:164.8px;width:17.2px;height:17.2px;background:#e4ebe4"><svg style="left:0;top:0" width="17.2" height="17.2" viewBox="0 0 17.2 17.2"><defs><filter id="m4" x="-15%" y="-15%" width="130%" height="130%"><feGaussianBlur stdDeviation="0.6"/></filter></defs><g filter="url(#m4)"><rect x="-1" y="-1" width="7" height="9" fill="#b5d5cc"/><rect x="5" y="2" width="13" height="9" fill="#eef1ec"/><path d="M-1 9c4 0 7 2 9 5l-2 4h-7z" fill="#9a917c"/><path d="M6 12c4-1 8-1 12 1v5H5z" fill="#d2d3c6"/><path d="M13 5l4 1-1 5-3-1z" fill="#a8b59a"/></g></svg></div>
<div class="t" style='left:904.6px;top:168.87px;font-size:6.9px;line-height:9.66px;color:#222;font-weight:400;font-family:"Liberation Sans","Noto Sans CJK SC",sans-serif;letter-spacing:3.031px;'>^^</div>
<svg style="left:1048.600px;top:168.4px" width="9" height="10" viewBox="0 0 9 10"><rect x="3.100" y="0.800" width="2.800" height="5" rx="1.400" fill="#c9cacf"/><path d="M1.900 4.400c0 3.300 5.200 3.300 5.200 0M4.500 7v1.500M3.200 8.800h2.600" stroke="#cfd0d4" stroke-width="0.650" fill="none"/><path d="M0.800 8.600L8.300 1" stroke="#f4696b" stroke-width="0.750"/></svg>
<svg style="left:1061.800px;top:170.0px" width="9" height="7" viewBox="0 0 9 7"><rect x="0.300" y="1.200" width="5.600" height="4.400" rx="0.500" fill="#c3c4c9"/><path d="M6.200 3.400l2.400-1.900v3.800z" fill="#c3c4c9"/><path d="M0.200 6.200L7.800 0.500" stroke="#f4696b" stroke-width="0.750"/></svg>
<div class="av" style="left:881.6px;top:189.6px;width:17.2px;height:17.2px;background:#5a8a45"><svg style="left:0;top:0" width="17.2" height="17.2" viewBox="0 0 17.2 17.2"><defs><filter id="m5" x="-15%" y="-15%" width="130%" height="130%"><feGaussianBlur stdDeviation="0.5"/></filter></defs><g filter="url(#m5)"><rect x="-1" y="-1" width="19" height="19" fill="#4f8a3c"/><path d="M-1 2c3-3 7-2 8 2l-1 6h-7z" fill="#2f5fa8"/><path d="M0 9c2-1 5-1 6 1l1 8h-8z" fill="#d8b24a"/><ellipse cx="4.500" cy="7.500" rx="2" ry="2.300" fill="#c79a78"/><path d="M8 -1l1.500 19" stroke="#86c04a" stroke-width="1.600"/><path d="M11 3c3-1 6 0 7 3v7l-5 2-3-5z" fill="#8a6a4a"/><path d="M10 13l8-2v7h-9z" fill="#3a5a38"/></g></svg></div>
<div class="t" style='left:904.5px;top:193.97px;font-size:6.9px;line-height:9.66px;color:#222;font-weight:400;font-family:"Liberation Sans","Noto Sans CJK SC",sans-serif;letter-spacing:0.186px;'>alchemist</div>
<svg style="left:1048.600px;top:193.2px" width="9" height="10" viewBox="0 0 9 10"><rect x="3.100" y="0.800" width="2.800" height="5" rx="1.400" fill="#c9cacf"/><path d="M1.900 4.400c0 3.300 5.200 3.300 5.200 0M4.500 7v1.500M3.200 8.800h2.600" stroke="#cfd0d4" stroke-width="0.650" fill="none"/><path d="M0.800 8.600L8.300 1" stroke="#f4696b" stroke-width="0.750"/></svg>
<svg style="left:1061.800px;top:194.8px" width="9" height="7" viewBox="0 0 9 7"><rect x="0.300" y="1.200" width="5.600" height="4.400" rx="0.500" fill="#c3c4c9"/><path d="M6.200 3.400l2.400-1.900v3.800z" fill="#c3c4c9"/><path d="M0.200 6.200L7.800 0.500" stroke="#f4696b" stroke-width="0.750"/></svg>
<div class="av" style="left:881.6px;top:214.4px;width:17.2px;height:17.2px;background:#0a6cff"><div class="t" style="left:0;top:0;width:17.200px;height:17.200px;line-height:17.200px;text-align:center;font-size:6.4px;color:#fff">C</div></div>
<div class="t" style='left:904.5px;top:218.77px;font-size:6.9px;line-height:9.66px;color:#222;font-weight:400;font-family:"Liberation Sans","Noto Sans CJK SC",sans-serif;letter-spacing:0.009px;'>cy</div>
<svg style="left:1048.600px;top:218.0px" width="9" height="10" viewBox="0 0 9 10"><rect x="3.100" y="0.800" width="2.800" height="5" rx="1.400" fill="#c9cacf"/><path d="M1.900 4.400c0 3.300 5.200 3.300 5.200 0M4.500 7v1.500M3.200 8.800h2.600" stroke="#cfd0d4" stroke-width="0.650" fill="none"/><path d="M0.800 8.600L8.300 1" stroke="#f4696b" stroke-width="0.750"/></svg>
<svg style="left:1061.800px;top:219.6px" width="9" height="7" viewBox="0 0 9 7"><rect x="0.300" y="1.200" width="5.600" height="4.400" rx="0.500" fill="#c3c4c9"/><path d="M6.200 3.400l2.400-1.900v3.800z" fill="#c3c4c9"/><path d="M0.200 6.200L7.800 0.500" stroke="#f4696b" stroke-width="0.750"/></svg>
<div class="av" style="left:881.6px;top:239.2px;width:17.2px;height:17.2px;background:#6f7a84"><svg style="left:0;top:0" width="17.2" height="17.2" viewBox="0 0 17.2 17.2"><defs><filter id="m7" x="-15%" y="-15%" width="130%" height="130%"><feGaussianBlur stdDeviation="0.5"/></filter></defs><g filter="url(#m7)"><rect x="-1" y="-1" width="19" height="19" fill="#66717c"/><path d="M-1 8c1-5 5-7 9-6 3 .5 5 3 5 6l-14 3z" fill="#c5b294"/><path d="M-1 8.500l14-2.500.3 2.200-14.300 3z" fill="#2a2623"/><path d="M9 8c3-1 6 0 9 2v5l-7 1z" fill="#c9cfd2"/><path d="M-1 11l8-1 4 8h-12z" fill="#7a4a42"/><path d="M7 11l6 0 1 7h-5z" fill="#b9b2a8"/></g></svg></div>
<div class="t" style='left:904.5px;top:243.57px;font-size:6.9px;line-height:9.66px;color:#222;font-weight:400;font-family:"Liberation Sans","Noto Sans CJK SC",sans-serif;letter-spacing:0.289px;'>Doutian</div>
<svg style="left:1048.600px;top:242.8px" width="9" height="10" viewBox="0 0 9 10"><rect x="3.100" y="0.800" width="2.800" height="5" rx="1.400" fill="#c9cacf"/><path d="M1.900 4.400c0 3.300 5.200 3.300 5.200 0M4.500 7v1.500M3.200 8.800h2.600" stroke="#cfd0d4" stroke-width="0.650" fill="none"/><path d="M0.800 8.600L8.300 1" stroke="#f4696b" stroke-width="0.750"/></svg>
<svg style="left:1061.800px;top:244.4px" width="9" height="7" viewBox="0 0 9 7"><rect x="0.300" y="1.200" width="5.600" height="4.400" rx="0.500" fill="#c3c4c9"/><path d="M6.200 3.400l2.400-1.900v3.800z" fill="#c3c4c9"/><path d="M0.200 6.200L7.800 0.500" stroke="#f4696b" stroke-width="0.750"/></svg>
<div class="av" style="left:881.6px;top:264.0px;width:17.2px;height:17.2px;background:#cfe8d9"><svg style="left:0;top:0" width="17.2" height="17.2" viewBox="0 0 17.2 17.2"><defs><filter id="m8" x="-15%" y="-15%" width="130%" height="130%"><feGaussianBlur stdDeviation="0.45"/></filter></defs><g filter="url(#m8)"><rect x="-1" y="-1" width="19" height="19" fill="#cde7d7"/><path d="M2.500 8c-1-4 0-6.500 2-7.500 2 1.500 2.500 4 2 7z" fill="#e9a152"/><path d="M14.700 8c1-4 0-6.500-2-7.500-2 1.500-2.500 4-2 7z" fill="#e9a152"/><ellipse cx="8.600" cy="13" rx="7.200" ry="6.200" fill="#fbf3ea"/><circle cx="5.200" cy="13" r="1.300" fill="#f6c8c0"/><circle cx="12" cy="13" r="1.300" fill="#f6c8c0"/></g></svg></div>
<div class="t" style='left:904.5px;top:268.37px;font-size:6.9px;line-height:9.66px;color:#222;font-weight:400;font-family:"Liberation Sans","Noto Sans CJK SC",sans-serif;letter-spacing:-0.438px;'>Eva</div>
<svg style="left:1048.600px;top:267.6px" width="9" height="10" viewBox="0 0 9 10"><rect x="3.100" y="0.800" width="2.800" height="5" rx="1.400" fill="#c9cacf"/><path d="M1.900 4.400c0 3.300 5.200 3.300 5.200 0M4.500 7v1.500M3.200 8.800h2.600" stroke="#cfd0d4" stroke-width="0.650" fill="none"/><path d="M0.800 8.600L8.300 1" stroke="#f4696b" stroke-width="0.750"/></svg>
<svg style="left:1061.800px;top:269.2px" width="9" height="7" viewBox="0 0 9 7"><rect x="0.300" y="1.200" width="5.600" height="4.400" rx="0.500" fill="#c3c4c9"/><path d="M6.200 3.400l2.400-1.900v3.800z" fill="#c3c4c9"/><path d="M0.200 6.200L7.800 0.500" stroke="#f4696b" stroke-width="0.750"/></svg>
<div class="av" style="left:881.6px;top:288.8px;width:17.2px;height:17.2px;background:#2a1545"><svg style="left:0;top:0" width="17.2" height="17.2" viewBox="0 0 17.2 17.2"><defs><filter id="m9" x="-15%" y="-15%" width="130%" height="130%"><feGaussianBlur stdDeviation="0.5"/></filter></defs><g filter="url(#m9)"><rect x="-1" y="-1" width="19" height="19" fill="#2b1648"/><rect x="-1" y="-1" width="19" height="5" fill="#3a1a3a"/><path d="M0 7.500h13l1 3.500H0z" fill="#e2622a"/><path d="M3 5v4M7 4.500v4M11 5v4" stroke="#8a2a2a" stroke-width="0.800"/><rect x="2" y="11" width="4.500" height="2.300" fill="#3fb4e6"/><rect x="13" y="5" width="5" height="10" fill="#3a3a9a"/><rect x="-1" y="14" width="19" height="4" fill="#3a1d5a"/></g></svg></div>
<div class="t" style='left:904.5px;top:293.17px;font-size:6.9px;line-height:9.66px;color:#222;font-weight:400;font-family:"Liberation Sans","Noto Sans CJK SC",sans-serif;letter-spacing:0.427px;'>lwj</div>
<svg style="left:1048.600px;top:292.4px" width="9" height="10" viewBox="0 0 9 10"><rect x="3.100" y="0.800" width="2.800" height="5" rx="1.400" fill="#c9cacf"/><path d="M1.900 4.400c0 3.300 5.200 3.300 5.200 0M4.500 7v1.500M3.200 8.800h2.600" stroke="#cfd0d4" stroke-width="0.650" fill="none"/><path d="M0.800 8.600L8.300 1" stroke="#f4696b" stroke-width="0.750"/></svg>
<svg style="left:1061.800px;top:294.0px" width="9" height="7" viewBox="0 0 9 7"><rect x="0.300" y="1.200" width="5.600" height="4.400" rx="0.500" fill="#c3c4c9"/><path d="M6.200 3.400l2.400-1.900v3.800z" fill="#c3c4c9"/><path d="M0.200 6.200L7.800 0.500" stroke="#f4696b" stroke-width="0.750"/></svg>
<div class="av" style="left:881.6px;top:313.6px;width:17.2px;height:17.2px;background:#e9c02a"><svg style="left:0;top:0" width="17.2" height="17.2" viewBox="0 0 17.2 17.2"><defs><filter id="m10" x="-15%" y="-15%" width="130%" height="130%"><feGaussianBlur stdDeviation="0.5"/></filter></defs><g filter="url(#m10)"><rect x="-1" y="-1" width="19" height="19" fill="#efc21e"/><rect x="13" y="2" width="5" height="12" fill="#2c4a9c"/><rect x="-1" y="-1" width="19" height="3.500" fill="#3a5a3a"/><ellipse cx="9" cy="9" rx="6" ry="5.200" fill="#f4c3ba"/><circle cx="5.500" cy="10.500" r="1.500" fill="#e2504a"/><circle cx="12.500" cy="10" r="1.500" fill="#e2504a"/><ellipse cx="9" cy="10" rx="1.800" ry="1.300" fill="#e89890"/><path d="M1 13c4 1 10 1 15-.5v5.500H1z" fill="#e6a8a0"/><rect x="-1" y="7" width="2.500" height="5" fill="#d83a30"/></g></svg></div>
<div class="t" style='left:904.5px;top:317.97px;font-size:6.9px;line-height:9.66px;color:#222;font-weight:400;font-family:"Liberation Sans","Noto Sans CJK SC",sans-serif;letter-spacing:-0.033px;'>Pan</div>
<svg style="left:1048.600px;top:317.2px" width="9" height="10" viewBox="0 0 9 10"><rect x="3.100" y="0.800" width="2.800" height="5" rx="1.400" fill="#c9cacf"/><path d="M1.900 4.400c0 3.300 5.200 3.300 5.200 0M4.500 7v1.500M3.200 8.800h2.600" stroke="#cfd0d4" stroke-width="0.650" fill="none"/><path d="M0.800 8.600L8.300 1" stroke="#f4696b" stroke-width="0.750"/></svg>
<svg style="left:1061.800px;top:318.8px" width="9" height="7" viewBox="0 0 9 7"><rect x="0.300" y="1.200" width="5.600" height="4.400" rx="0.500" fill="#c3c4c9"/><path d="M6.200 3.400l2.400-1.900v3.800z" fill="#c3c4c9"/><path d="M0.200 6.200L7.800 0.500" stroke="#f4696b" stroke-width="0.750"/></svg>
<div class="av" style="left:881.6px;top:338.4px;width:17.2px;height:17.2px;background:#cdbd98"><svg style="left:0;top:0" width="17.2" height="17.2" viewBox="0 0 25 25"><defs><filter id="m11"><feGaussianBlur stdDeviation="0.600"/></filter></defs><g filter="url(#m11)"><rect width="25" height="25" fill="#cfc09c"/><path d="M11.500 25V12.500l1.500-4 1-5h2l.5 5 2.500 3.500V25z" fill="#4a473d"/><path d="M7 22l2-15 1.300.2-1.600 15z" fill="#5c584c"/><path d="M9 9l4 2" stroke="#4a473d" stroke-width="1.200"/></g></svg></div>
<div class="t" style='left:904.5px;top:342.77px;font-size:6.9px;line-height:9.66px;color:#222;font-weight:400;font-family:"Liberation Sans","Noto Sans CJK SC",sans-serif;letter-spacing:0.825px;'>qj</div>
<div class="a" style="left:1003.3px;top:339.9px;width:33.9px;height:13.3px;background:#0a6cff;border-radius:1.500px"></div>
<div class="a" style="left:1040.7px;top:339.9px;width:31.3px;height:13.3px;background:#0a6cff;border-radius:1.500px"></div>
<div class="t" style='left:1008.1px;top:341.95px;font-size:6.5px;line-height:9.1px;color:#fff;font-weight:400;font-family:"Liberation Sans","Noto Sans CJK SC",sans-serif;letter-spacing:-0.533px;'>解除静音</div>
<div class="t" style='left:1047.4px;top:341.95px;font-size:6.5px;line-height:9.1px;color:#fff;font-weight:400;font-family:"Liberation Sans","Noto Sans CJK SC",sans-serif;letter-spacing:-0.8px;'>更多</div>
<svg style="left:1062.200px;top:345px" width="4" height="3" viewBox="0 0 4 3"><path d="M0 0h4L2 3z" fill="#fff"/></svg>
<div class="av" style="left:881.6px;top:363.2px;width:17.2px;height:17.2px;background:#e4dbd4"><svg style="left:0;top:0" width="17.2" height="17.2" viewBox="0 0 17.2 17.2"><defs><filter id="m12" x="-15%" y="-15%" width="130%" height="130%"><feGaussianBlur stdDeviation="0.5"/></filter></defs><g filter="url(#m12)"><rect x="-1" y="-1" width="19" height="9" fill="#e8e0da"/><rect x="-1" y="6.500" width="19" height="2.600" fill="#c9b2a0"/><path d="M-1 8.500h19" stroke="#8a6a55" stroke-width="0.500"/><rect x="-1" y="9.500" width="19" height="9" fill="#8e3c24"/><rect x="-1" y="9" width="19" height="2" fill="#b06a4a"/></g></svg></div>
<div class="t" style='left:904.5px;top:367.57px;font-size:6.9px;line-height:9.66px;color:#222;font-weight:400;font-family:"Liberation Sans","Noto Sans CJK SC",sans-serif;letter-spacing:0.364px;'>utopia</div>
<svg style="left:1048.600px;top:366.8px" width="9" height="10" viewBox="0 0 9 10"><rect x="3.100" y="0.800" width="2.800" height="5" rx="1.400" fill="#c9cacf"/><path d="M1.900 4.400c0 3.300 5.200 3.300 5.200 0M4.500 7v1.500M3.200 8.800h2.600" stroke="#cfd0d4" stroke-width="0.650" fill="none"/><path d="M0.800 8.600L8.300 1" stroke="#f4696b" stroke-width="0.750"/></svg>
<svg style="left:1061.800px;top:368.4px" width="9" height="7" viewBox="0 0 9 7"><rect x="0.300" y="1.200" width="5.600" height="4.400" rx="0.500" fill="#c3c4c9"/><path d="M6.200 3.400l2.400-1.900v3.800z" fill="#c3c4c9"/><path d="M0.200 6.200L7.800 0.500" stroke="#f4696b" stroke-width="0.750"/></svg>
<div class="av" style="left:881.6px;top:388.0px;width:17.2px;height:17.2px;background:#0a6cff"><div class="t" style="left:0;top:0;width:17.200px;height:17.200px;line-height:17.200px;text-align:center;font-size:6.4px;color:#fff">Z</div></div>
<div class="t" style='left:904.5px;top:392.37px;font-size:6.9px;line-height:9.66px;color:#222;font-weight:400;font-family:"Liberation Sans","Noto Sans CJK SC",sans-serif;letter-spacing:0.162px;'>zyw</div>
<svg style="left:1048.600px;top:391.6px" width="9" height="10" viewBox="0 0 9 10"><rect x="3.100" y="0.800" width="2.800" height="5" rx="1.400" fill="#c9cacf"/><path d="M1.900 4.400c0 3.300 5.200 3.300 5.200 0M4.500 7v1.500M3.200 8.800h2.600" stroke="#cfd0d4" stroke-width="0.650" fill="none"/><path d="M0.800 8.600L8.300 1" stroke="#f4696b" stroke-width="0.750"/></svg>
<svg style="left:1061.800px;top:393.2px" width="9" height="7" viewBox="0 0 9 7"><rect x="0.300" y="1.200" width="5.600" height="4.400" rx="0.500" fill="#c3c4c9"/><path d="M6.200 3.400l2.400-1.900v3.800z" fill="#c3c4c9"/><path d="M0.200 6.200L7.800 0.500" stroke="#f4696b" stroke-width="0.750"/></svg>
<div class="av" style="left:881.6px;top:412.8px;width:17.2px;height:17.2px;background:#bfeef5"><svg style="left:0;top:0" width="17.2" height="17.2" viewBox="0 0 17.2 17.2"><defs><filter id="m14" x="-15%" y="-15%" width="130%" height="130%"><feGaussianBlur stdDeviation="0.4"/></filter></defs><g filter="url(#m14)"><rect x="-1" y="-1" width="19" height="19" fill="#bdeef6"/><path d="M10 10h8v8h-8z" fill="#f2f6f7"/><path d="M4.500 6c0-3 1.500-4.500 4-4.500s4 1.500 4 4.500v8h-8z" fill="#16171c"/><rect x="5.600" y="3.500" width="2" height="10.500" fill="#2b4aa0"/><rect x="7.600" y="3.500" width="2" height="10.500" fill="#f5f5f5"/><rect x="9.600" y="3.500" width="2" height="10.500" fill="#d9333a"/><path d="M4.500 13.500h8" stroke="#c23a2a" stroke-width="0.800"/><path d="M2 5l1.500-2M13.500 3l1.500 2.500" stroke="#555" stroke-width="0.400"/></g></svg></div>
<div class="t" style='left:904.5px;top:417.17px;font-size:6.9px;line-height:9.66px;color:#222;font-weight:400;font-family:"Liberation Sans","Noto Sans CJK SC",sans-serif;letter-spacing:-0.881px;'>安安</div>
<svg style="left:1048.600px;top:416.4px" width="9" height="10" viewBox="0 0 9 10"><rect x="3.100" y="0.800" width="2.800" height="5" rx="1.400" fill="#c9cacf"/><path d="M1.900 4.400c0 3.300 5.200 3.300 5.200 0M4.500 7v1.500M3.200 8.800h2.600" stroke="#cfd0d4" stroke-width="0.650" fill="none"/><path d="M0.800 8.600L8.300 1" stroke="#f4696b" stroke-width="0.750"/></svg>
<svg style="left:1061.800px;top:418.0px" width="9" height="7" viewBox="0 0 9 7"><rect x="0.300" y="1.200" width="5.600" height="4.400" rx="0.500" fill="#c3c4c9"/><path d="M6.200 3.400l2.400-1.900v3.800z" fill="#c3c4c9"/><path d="M0.200 6.200L7.800 0.500" stroke="#f4696b" stroke-width="0.750"/></svg>
<div class="av" style="left:881.6px;top:437.6px;width:17.2px;height:17.2px;background:#1c2344"><svg style="left:0;top:0" width="17.2" height="17.2" viewBox="0 0 17.2 17.2"><defs><filter id="m15" x="-15%" y="-15%" width="130%" height="130%"><feGaussianBlur stdDeviation="0.45"/></filter></defs><g filter="url(#m15)"><rect x="-1" y="-1" width="19" height="19" fill="#1d2446"/><path d="M0 11.500l4-3 3.500-4 2.500 1.500 2 1.500 5 4.500z" fill="#e9782b"/><path d="M7.500 4.500l2.500 1.500-1 3-3-1z" fill="#f2a04a"/><path d="M-1 11l6-.5 6 1 7-.5v8h-19z" fill="#151828"/></g></svg></div>
<div class="t" style='left:904.5px;top:441.97px;font-size:6.9px;line-height:9.66px;color:#222;font-weight:400;font-family:"Liberation Sans","Noto Sans CJK SC",sans-serif;letter-spacing:0.167px;'>薄伽梵&amp;交大</div>
<svg style="left:1048.600px;top:441.2px" width="9" height="10" viewBox="0 0 9 10"><rect x="3.100" y="0.800" width="2.800" height="5" rx="1.400" fill="#c9cacf"/><path d="M1.900 4.400c0 3.300 5.200 3.300 5.200 0M4.500 7v1.500M3.200 8.800h2.600" stroke="#cfd0d4" stroke-width="0.650" fill="none"/><path d="M0.800 8.600L8.300 1" stroke="#f4696b" stroke-width="0.750"/></svg>
<svg style="left:1061.800px;top:442.8px" width="9" height="7" viewBox="0 0 9 7"><rect x="0.300" y="1.200" width="5.600" height="4.400" rx="0.500" fill="#c3c4c9"/><path d="M6.200 3.400l2.400-1.900v3.800z" fill="#c3c4c9"/><path d="M0.200 6.200L7.800 0.500" stroke="#f4696b" stroke-width="0.750"/></svg>
<div class="av" style="left:881.6px;top:462.4px;width:17.2px;height:17.2px;background:#d6d4ae"><svg style="left:0;top:0" width="17.2" height="17.2" viewBox="0 0 17.2 17.2"><defs><filter id="m16" x="-15%" y="-15%" width="130%" height="130%"><feGaussianBlur stdDeviation="0.5"/></filter></defs><g filter="url(#m16)"><rect x="-1" y="-1" width="19" height="19" fill="#d8d5ae"/><rect x="-1" y="-1" width="19" height="5" fill="#8da474"/><rect x="-1" y="3.500" width="19" height="2" fill="#b4bd8c"/><path d="M6 6.500c1-1.500 3.500-1.500 4.500 0l1 4-1 4.500h-1l-.5-2.500-2 0-.5 2.500h-1l-.5-5z" fill="#d69a5a"/><ellipse cx="8.300" cy="7" rx="2" ry="1.700" fill="#e2b070"/><rect x="-1" y="14" width="19" height="4" fill="#c9c69a"/></g></svg></div>
<div class="t" style='left:904.5px;top:466.77px;font-size:6.9px;line-height:9.66px;color:#222;font-weight:400;font-family:"Liberation Sans","Noto Sans CJK SC",sans-serif;letter-spacing:-0.111px;'>柴顺 西北大学</div>
<svg style="left:1048.600px;top:466.0px" width="9" height="10" viewBox="0 0 9 10"><rect x="3.100" y="0.800" width="2.800" height="5" rx="1.400" fill="#c9cacf"/><path d="M1.900 4.400c0 3.300 5.200 3.300 5.200 0M4.500 7v1.500M3.200 8.800h2.600" stroke="#cfd0d4" stroke-width="0.650" fill="none"/><path d="M0.800 8.600L8.300 1" stroke="#f4696b" stroke-width="0.750"/></svg>
<svg style="left:1061.800px;top:467.6px" width="9" height="7" viewBox="0 0 9 7"><rect x="0.300" y="1.200" width="5.600" height="4.400" rx="0.500" fill="#c3c4c9"/><path d="M6.200 3.400l2.400-1.900v3.800z" fill="#c3c4c9"/><path d="M0.200 6.200L7.800 0.500" stroke="#f4696b" stroke-width="0.750"/></svg>
<div class="av" style="left:881.6px;top:487.2px;width:17.2px;height:17.2px;background:#f5f1f2"><svg style="left:0;top:0" width="17.2" height="17.2" viewBox="0 0 17.2 17.2"><path d="M5.400 6.500c0-3 1.300-4.600 3.200-4.600s3.200 1.600 3.200 4.600c0 2.600-1.300 4.400-3.200 4.400s-3.200-1.800-3.200-4.400z" fill="#fdfbfb" stroke="#4a4a4a" stroke-width="0.450"/><path d="M5.400 6c-1 .2-1 2 .2 2.400M11.800 6c1 .2 1 2-.2 2.400" fill="none" stroke="#4a4a4a" stroke-width="0.400"/><path d="M2.500 15c1.200-2 3-2.800 4.500-3l1.600 1.500 1.600-1.500c1.500.2 3.300 1 4.500 3" fill="none" stroke="#4a4a4a" stroke-width="0.450"/><circle cx="6.300" cy="8" r="0.900" fill="#ee9a9a"/><circle cx="10.900" cy="8" r="0.900" fill="#ee9a9a"/><path d="M6.500 3.500c1.300-.8 2.900-.8 4.200 0" fill="none" stroke="#4a4a4a" stroke-width="0.350"/></svg></div>
<div class="t" style='left:904.5px;top:491.57px;font-size:6.9px;line-height:9.66px;color:#222;font-weight:400;font-family:"Liberation Sans","Noto Sans CJK SC",sans-serif;letter-spacing:-0.136px;'>陈柏源</div>
<svg style="left:1048.600px;top:490.8px" width="9" height="10" viewBox="0 0 9 10"><rect x="3.100" y="0.800" width="2.800" height="5" rx="1.400" fill="#c9cacf"/><path d="M1.900 4.400c0 3.300 5.200 3.300 5.200 0M4.500 7v1.500M3.200 8.800h2.600" stroke="#cfd0d4" stroke-width="0.650" fill="none"/><path d="M0.800 8.600L8.300 1" stroke="#f4696b" stroke-width="0.750"/></svg>
<svg style="left:1061.800px;top:492.4px" width="9" height="7" viewBox="0 0 9 7"><rect x="0.300" y="1.200" width="5.600" height="4.400" rx="0.500" fill="#c3c4c9"/><path d="M6.200 3.400l2.400-1.900v3.800z" fill="#c3c4c9"/><path d="M0.200 6.200L7.800 0.500" stroke="#f4696b" stroke-width="0.750"/></svg>
<div class="av" style="left:881.6px;top:512.0px;width:17.2px;height:17.2px;background:#ec5a44"><svg style="left:0;top:0" width="17.2" height="17.2" viewBox="0 0 17.2 17.2"><defs><filter id="m18" x="-15%" y="-15%" width="130%" height="130%"><feGaussianBlur stdDeviation="0.4"/></filter></defs><g filter="url(#m18)"><circle cx="8.600" cy="8.600" r="7.600" fill="#6f7f5a"/><path d="M1.500 6c2-3 5-4.500 8-4 3 .3 5 2 6 4.500l-2 3h-10z" fill="#8a9a6a"/><ellipse cx="8" cy="7" rx="2.900" ry="3.200" fill="#d9b8a2"/><path d="M5 5.500c.5-2.500 5.500-2.500 6 0-1.500-1-4.500-1-6 0z" fill="#7a7a78"/><path d="M2 13c1.500-2.500 4-3 6-3s5 .5 6.500 3l-1.500 3.500h-9z" fill="#23252c"/><path d="M7 10.500l1 3 1-3z" fill="#6a8ad0"/><rect x="10" y="11.500" width="3" height="3.500" fill="#f0d21e"/></g></svg></div>
<div class="t" style='left:904.5px;top:516.37px;font-size:6.9px;line-height:9.66px;color:#222;font-weight:400;font-family:"Liberation Sans","Noto Sans CJK SC",sans-serif;letter-spacing:-0.136px;'>陈中奇</div>
<svg style="left:1048.600px;top:515.6px" width="9" height="10" viewBox="0 0 9 10"><rect x="3.100" y="0.800" width="2.800" height="5" rx="1.400" fill="#c9cacf"/><path d="M1.900 4.400c0 3.300 5.200 3.300 5.200 0M4.500 7v1.500M3.200 8.800h2.600" stroke="#cfd0d4" stroke-width="0.650" fill="none"/><path d="M0.800 8.600L8.300 1" stroke="#f4696b" stroke-width="0.750"/></svg>
<svg style="left:1061.800px;top:517.2px" width="9" height="7" viewBox="0 0 9 7"><rect x="0.300" y="1.200" width="5.600" height="4.400" rx="0.500" fill="#c3c4c9"/><path d="M6.200 3.400l2.400-1.900v3.800z" fill="#c3c4c9"/><path d="M0.200 6.200L7.800 0.500" stroke="#f4696b" stroke-width="0.750"/></svg>
<div class="av" style="left:881.6px;top:536.8px;width:17.2px;height:17.2px;background:#c02a24"><svg style="left:0;top:0" width="17.2" height="17.2" viewBox="0 0 17.2 17.2"><defs><filter id="m19" x="-15%" y="-15%" width="130%" height="130%"><feGaussianBlur stdDeviation="0.5"/></filter></defs><g filter="url(#m19)"><rect x="-1" y="-1" width="19" height="19" fill="#c32b25"/><path d="M-1 -1h5c-2 5-2 12 0 19h-5z" fill="#8e1c1a"/><path d="M12 2c3 2 5 6 4 12l-3 4h-4z" fill="#b0241f"/><circle cx="4.800" cy="4" r="1" fill="#f0c41e"/><circle cx="4.500" cy="9.500" r="0.600" fill="#f0c41e"/><path d="M2 3.500l3-1.200" stroke="#2a1a18" stroke-width="0.600"/></g></svg></div>
<div class="t" style='left:904.5px;top:541.17px;font-size:6.9px;line-height:9.66px;color:#222;font-weight:400;font-family:"Liberation Sans","Noto Sans CJK SC",sans-serif;letter-spacing:-0.381px;'>扈曦</div>
<svg style="left:1048.600px;top:540.4px" width="9" height="10" viewBox="0 0 9 10"><rect x="3.100" y="0.800" width="2.800" height="5" rx="1.400" fill="#c9cacf"/><path d="M1.900 4.400c0 3.300 5.200 3.300 5.200 0M4.500 7v1.500M3.200 8.800h2.600" stroke="#cfd0d4" stroke-width="0.650" fill="none"/><path d="M0.800 8.600L8.300 1" stroke="#f4696b" stroke-width="0.750"/></svg>
<svg style="left:1061.800px;top:542.0px" width="9" height="7" viewBox="0 0 9 7"><rect x="0.300" y="1.200" width="5.600" height="4.400" rx="0.500" fill="#c3c4c9"/><path d="M6.200 3.400l2.400-1.900v3.800z" fill="#c3c4c9"/><path d="M0.200 6.200L7.800 0.500" stroke="#f4696b" stroke-width="0.750"/></svg>
</div></div>
<div class="a" style="left:890px;top:64.2px;width:137.2px;height:19.6px;background:#2a2d31;"></div>
<svg style="left:895.500px;top:69.300px" width="9" height="10" viewBox="0 0 9 10"><rect x="3" y="0.800" width="3" height="5.200" rx="1.500" fill="#85878c"/><path d="M1.800 4.600c0 3.400 5.400 3.400 5.400 0M4.500 7.200v1.400M3 8.900h3" stroke="#85878c" stroke-width="0.700" fill="none"/><path d="M1 8.600L8 1.200" stroke="#d8413d" stroke-width="0.900"/></svg>
<div class="a" style="left:910.2px;top:68.5px;width:0.6px;height:11px;background:#4a4d52;"></div>
<div class="t" style='left:915.4px;top:69.57px;font-size:6.9px;line-height:9.66px;color:#f2f2f2;font-weight:400;font-family:"Liberation Sans","Noto Sans CJK SC",sans-serif;letter-spacing:0.015px;'>正在讲话: 张凤阳</div>
<svg style="left:995.500px;top:67.800px" width="25" height="13" viewBox="0 0 25 13"><path d="M0 8l7-7.500 5.500 6L7 12.500z" fill="#3d4045"/><path d="M9.500 8l7-7.500L24.500 8 18 12.500z" fill="#44474c"/></svg>
<div class="a" style="left:872px;top:552.3px;width:208px;height:0.8px;background:#ebecef;"></div>
<div class="a" style="left:897.2px;top:561.700px;width:49.4px;height:14px;border:0.800px solid #dfe1e7;box-sizing:border-box;border-radius:1px;background:#fff"></div>
<div class="a" style="left:955.6px;top:561.700px;width:49.4px;height:14px;border:0.800px solid #dfe1e7;box-sizing:border-box;border-radius:1px;background:#fff"></div>
<div class="a" style="left:1014.3px;top:561.700px;width:40px;height:14px;border:0.800px solid #dfe1e7;box-sizing:border-box;border-radius:1px;background:#fff"></div>
<div class="t" style='left:908.9px;top:564.38px;font-size:6.6px;line-height:9.24px;color:#1a6dff;font-weight:400;font-family:"Liberation Sans","Noto Sans CJK SC",sans-serif;letter-spacing:-0.058px;'>全体静音</div>
<div class="t" style='left:959.8px;top:564.38px;font-size:6.6px;line-height:9.24px;color:#1a6dff;font-weight:400;font-family:"Liberation Sans","Noto Sans CJK SC",sans-serif;letter-spacing:0.167px;'>解除全体静音</div>
<div class="t" style='left:1024.6px;top:564.38px;font-size:6.6px;line-height:9.24px;color:#1a6dff;font-weight:400;font-family:"Liberation Sans","Noto Sans CJK SC",sans-serif;letter-spacing:-0.588px;'>更多</div>
<svg style="left:1040.800px;top:568px" width="3" height="2.200" viewBox="0 0 3 2.200"><path d="M0 0h3L1.500 2.200z" fill="#1a6dff"/></svg>
<div class="a" style="left:872px;top:585px;width:208px;height:1px;background:#9a9b9e;"></div>
<div class="a" style="left:872px;top:17px;width:0.6px;height:569px;background:#1b1c1e;"></div></body></html>
